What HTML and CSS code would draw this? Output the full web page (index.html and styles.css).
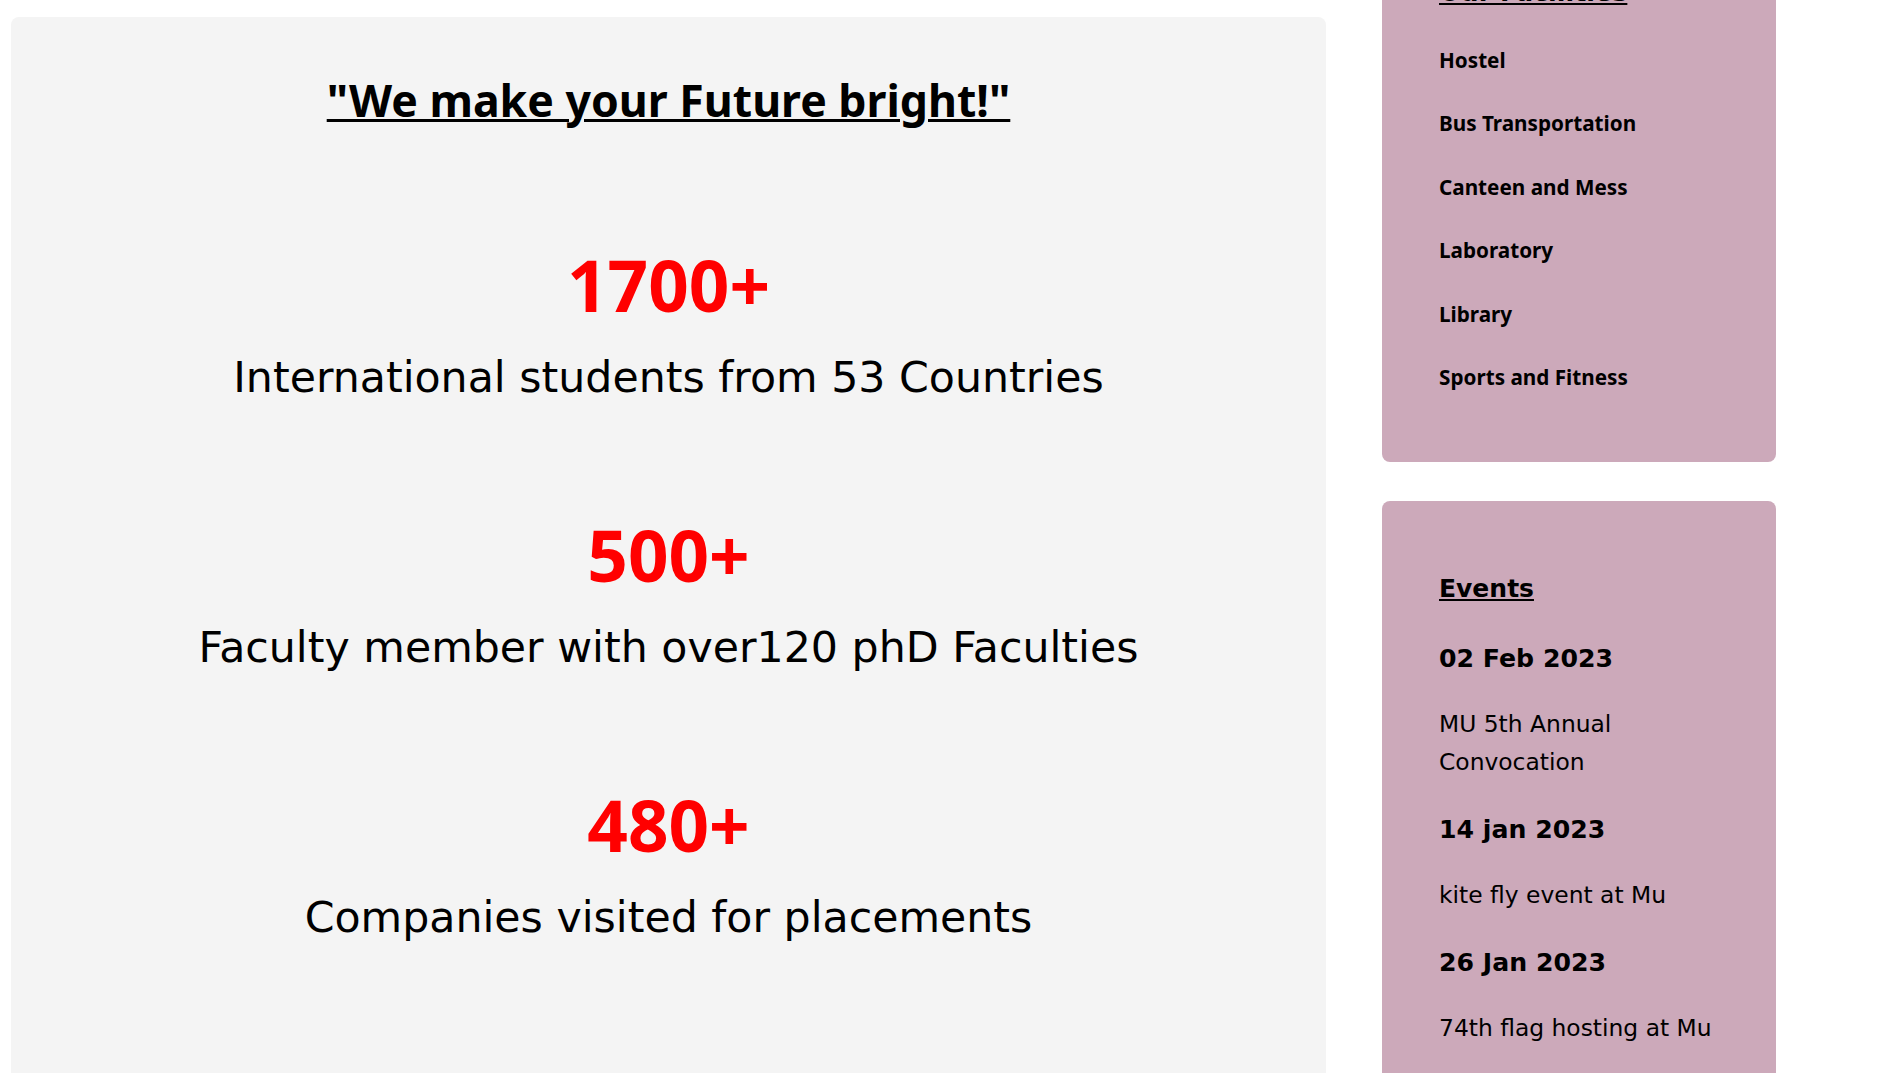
FILE: index.html
```html
<!DOCTYPE html>
<html lang="en">
<head>
<meta charset="utf-8">
<title>MU</title>
<link rel="stylesheet" href="styles.css">
</head>
<body>
<div class="page">
  <main class="hero">
    <h1 class="motto">"We make your Future bright!"</h1>
    <section class="stat">
      <div class="stat-num">1700+</div>
      <p class="stat-label">International students from 53 Countries</p>
    </section>
    <section class="stat">
      <div class="stat-num">500+</div>
      <p class="stat-label">Faculty member with over120 phD Faculties</p>
    </section>
    <section class="stat">
      <div class="stat-num">480+</div>
      <p class="stat-label">Companies visited for placements</p>
    </section>
  </main>
  <aside class="sidebar">
    <div class="side-card facilities">
      <h2 class="side-title">Our Facilities</h2>
      <ul class="fac-list">
        <li>Hostel</li>
        <li>Bus Transportation</li>
        <li>Canteen and Mess</li>
        <li>Laboratory</li>
        <li>Library</li>
        <li>Sports and Fitness</li>
      </ul>
    </div>
    <div class="side-card events">
      <h2 class="side-title">Events</h2>
      <h3 class="event-date first">02 Feb 2023</h3>
      <p class="event-desc">MU 5th Annual Convocation</p>
      <h3 class="event-date">14 jan 2023</h3>
      <p class="event-desc">kite fly event at Mu</p>
      <h3 class="event-date">26 Jan 2023</h3>
      <p class="event-desc">74th flag hosting at Mu</p>
    </div>
  </aside>
</div>
</body>
</html>
```
FILE: styles.css
```css
html, body {
  margin: 0;
  padding: 0;
  background: #ffffff;
}

body {
  font-family: "DejaVu Sans", Verdana, sans-serif;
  color: #000;
  overflow: hidden;
}

.page {
  display: flex;
  align-items: flex-start;
  padding-left: 11px;
}

.hero {
  flex: 0 0 1315px;
  margin-top: 17px;
  background: #f4f4f4;
  border-radius: 8px;
  text-align: center;
  padding: 55px 0 200px;
}

.motto {
  margin: 0;
  font-family: "Noto Sans", "DejaVu Sans", sans-serif;
  font-weight: 700;
  font-size: 44.6px;
  line-height: 56px;
  text-decoration: underline;
  text-decoration-thickness: 3px;
}

.stat {
  margin-top: 113.4px;
}

.stat:first-of-type {
  margin-top: 117px;
}

.stat-num {
  font-family: "Noto Sans", "DejaVu Sans", sans-serif;
  font-weight: 700;
  font-size: 71px;
  line-height: 80px;
  color: #ff0000;
}

.stat-label {
  margin: 26.6px 0 0;
  font-size: 42.7px;
  line-height: 50px;
}

.sidebar {
  flex: 0 0 394px;
  margin-left: 56px;
  margin-top: -63px;
  display: flex;
  flex-direction: column;
  gap: 39px;
}

.side-card {
  background: #cca9ba;
  border-radius: 8px;
  padding: 40px 57px 55px;
}

.facilities {
  padding-bottom: 53px;
}

.side-title {
  margin: 0;
  font-size: 25.4px;
  line-height: 30px;
  font-weight: 700;
  text-decoration: underline;
}

.fac-list {
  list-style: none;
  margin: 22px 0 0;
  padding: 0;
}

.fac-list li {
  font-family: "Noto Sans", "DejaVu Sans", sans-serif;
  font-weight: 700;
  font-size: 20.7px;
  line-height: 63.4px;
}

.events {
  padding-top: 73px;
  padding-bottom: 80px;
}

.events .side-title {
  font-size: 25px;
}

.event-date {
  margin: 33.6px 0 0;
  font-size: 25.2px;
  line-height: 30px;
  font-weight: 700;
}

.event-date.first {
  margin-top: 39.5px;
}

.event-desc {
  margin: 32.2px 0 0;
  font-size: 23.4px;
  line-height: 37.4px;
}
```
